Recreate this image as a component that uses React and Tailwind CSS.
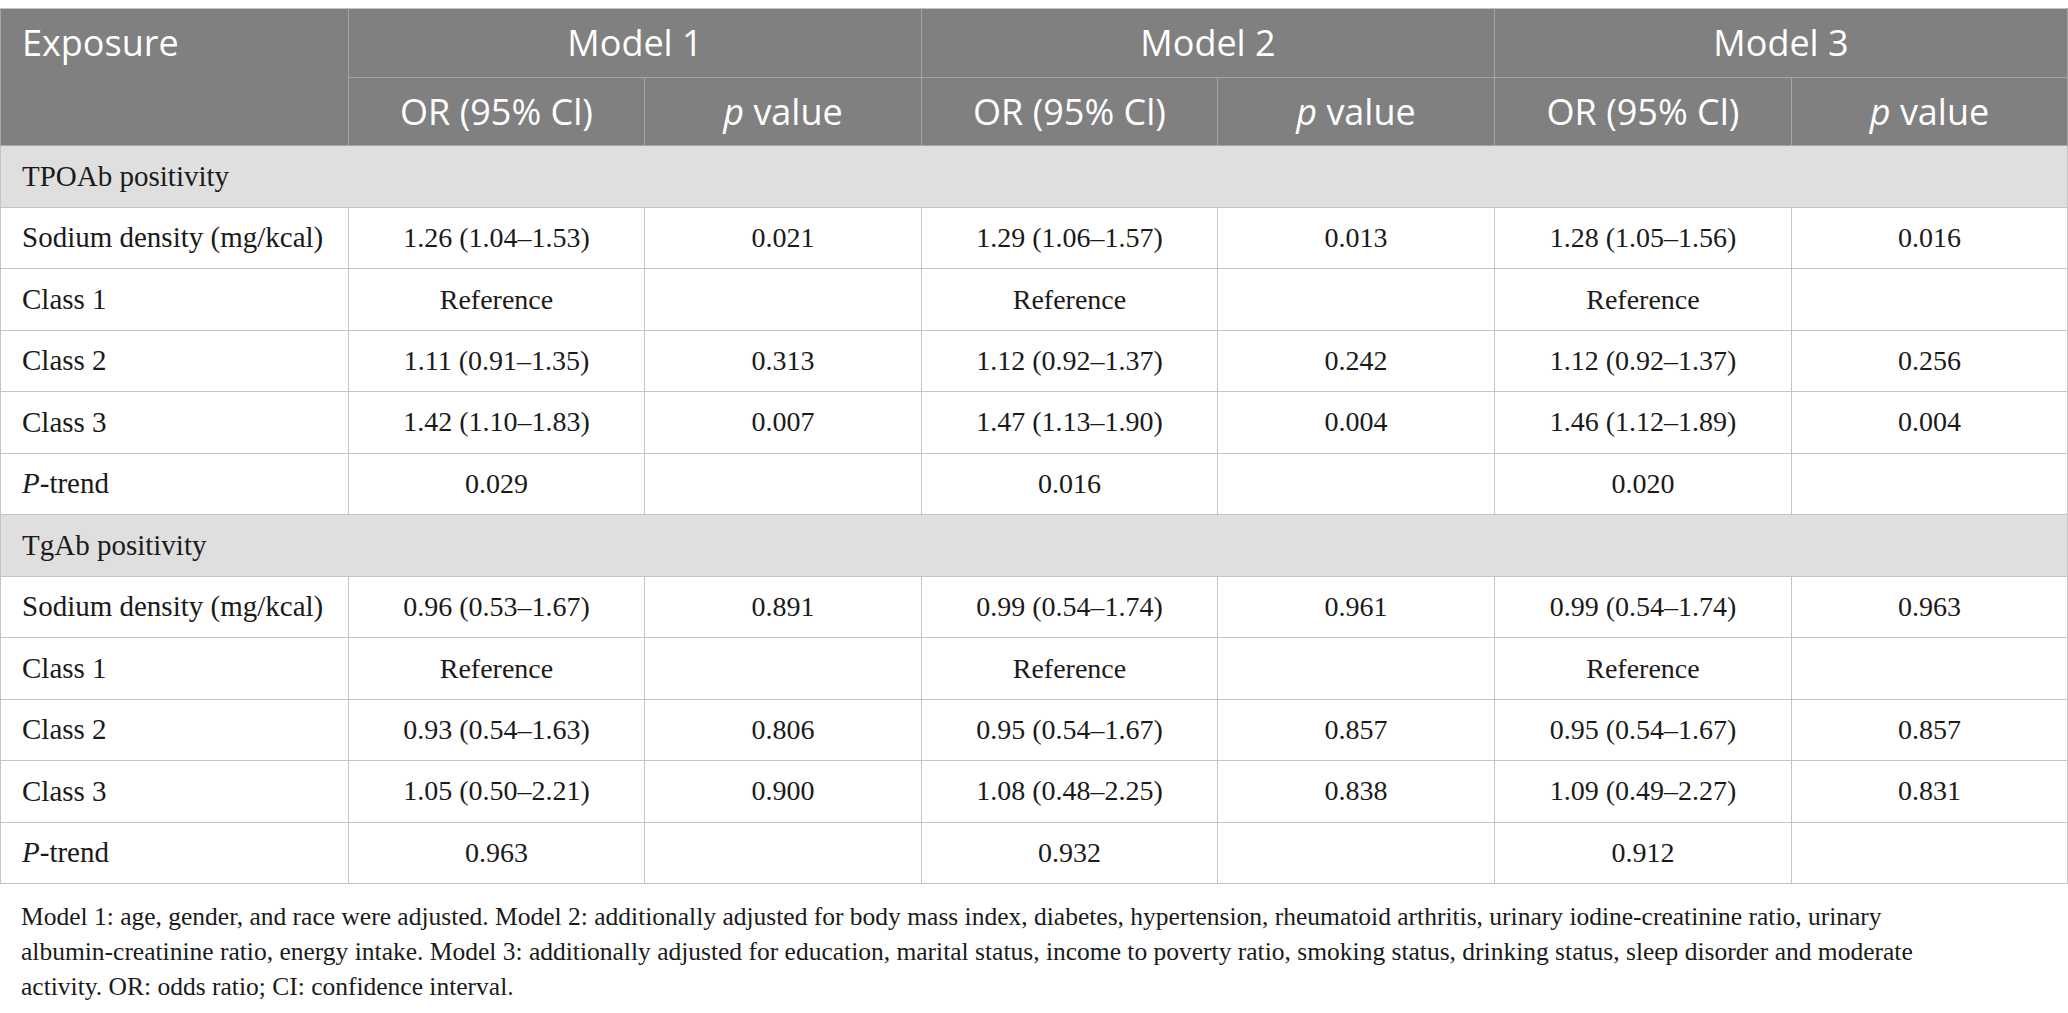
const groups = [
  {
    title: "TPOAb positivity",
    rows: [
      ["Sodium density (mg/kcal)", "1.26 (1.04–1.53)", "0.021", "1.29 (1.06–1.57)", "0.013", "1.28 (1.05–1.56)", "0.016"],
      ["Class 1", "Reference", "", "Reference", "", "Reference", ""],
      ["Class 2", "1.11 (0.91–1.35)", "0.313", "1.12 (0.92–1.37)", "0.242", "1.12 (0.92–1.37)", "0.256"],
      ["Class 3", "1.42 (1.10–1.83)", "0.007", "1.47 (1.13–1.90)", "0.004", "1.46 (1.12–1.89)", "0.004"],
      ["P-trend", "0.029", "", "0.016", "", "0.020", ""],
    ],
  },
  {
    title: "TgAb positivity",
    rows: [
      ["Sodium density (mg/kcal)", "0.96 (0.53–1.67)", "0.891", "0.99 (0.54–1.74)", "0.961", "0.99 (0.54–1.74)", "0.963"],
      ["Class 1", "Reference", "", "Reference", "", "Reference", ""],
      ["Class 2", "0.93 (0.54–1.63)", "0.806", "0.95 (0.54–1.67)", "0.857", "0.95 (0.54–1.67)", "0.857"],
      ["Class 3", "1.05 (0.50–2.21)", "0.900", "1.08 (0.48–2.25)", "0.838", "1.09 (0.49–2.27)", "0.831"],
      ["P-trend", "0.963", "", "0.932", "", "0.912", ""],
    ],
  },
];

const sans = "font-['Open_Sans',sans-serif]";
const serif = "font-['Liberation_Serif',serif]";

function Label({ text }) {
  if (text === "P-trend") {
    return (
      <>
        <i>P</i>-trend
      </>
    );
  }
  return text;
}

function PValue() {
  return (
    <>
      <i>p</i> value
    </>
  );
}

export default function App() {
  return (
    <div className="min-h-screen bg-white pt-2">
      <table className="w-full table-fixed border-collapse text-[#1a1a1a]">
        <colgroup>
          <col className="w-[348px]" />
          <col className="w-[296px]" />
          <col className="w-[277px]" />
          <col className="w-[296px]" />
          <col className="w-[277px]" />
          <col className="w-[297px]" />
          <col />
        </colgroup>
        <thead className={`${sans} bg-[#808080] text-white text-[36px] font-normal`}>
          <tr className="h-[69px]">
            <th
              rowSpan={2}
              className="border border-[#a6a6a6] border-t-[#c4c4c4] px-[21px] pt-[7px] text-left align-top font-normal"
            >
              Exposure
            </th>
            <th colSpan={2} className="border border-[#a6a6a6] border-t-[#c4c4c4] font-normal">Model 1</th>
            <th colSpan={2} className="border border-[#a6a6a6] border-t-[#c4c4c4] font-normal">Model 2</th>
            <th colSpan={2} className="border border-[#a6a6a6] border-t-[#c4c4c4] font-normal">Model 3</th>
          </tr>
          <tr className="h-[68px]">
            {[1, 2, 3].map((m) => (
              <>
                <th key={`or${m}`} className="border border-[#a6a6a6] font-normal">OR (95% Cl)</th>
                <th key={`p${m}`} className="border border-[#a6a6a6] font-normal">
                  <PValue />
                </th>
              </>
            ))}
          </tr>
        </thead>
        <tbody className={`${serif} text-[28px]`}>
          {groups.map((g) => (
            <>
              <tr key={g.title} className="h-[62px] bg-[#e0dfe0]">
                <td colSpan={7} className="border border-[#c4c4c4] px-[21px] text-[29px]">
                  {g.title}
                </td>
              </tr>
              {g.rows.map((r, i) => (
                <tr key={g.title + i} className="h-[61.4px]">
                  {r.map((c, j) => (
                    <td
                      key={j}
                      className={`border border-[#c4c4c4] ${j === 0 ? "px-[21px] text-left text-[29px]" : "text-center"}`}
                    >
                      {j === 0 ? <Label text={c} /> : c}
                    </td>
                  ))}
                </tr>
              ))}
            </>
          ))}
        </tbody>
      </table>
      <p className={`${serif} px-[21px] pt-[15px] text-[25.5px] leading-[35px] text-[#1a1a1a] whitespace-nowrap`}>
        Model 1: age, gender, and race were adjusted. Model 2: additionally adjusted for body mass index, diabetes,
        hypertension, rheumatoid arthritis, urinary iodine-creatinine ratio, urinary
        <br />
        albumin-creatinine ratio, energy intake. Model 3: additionally adjusted for education, marital status, income to
        poverty ratio, smoking status, drinking status, sleep disorder and moderate
        <br />
        activity. OR: odds ratio; CI: confidence interval.
      </p>
    </div>
  );
}
